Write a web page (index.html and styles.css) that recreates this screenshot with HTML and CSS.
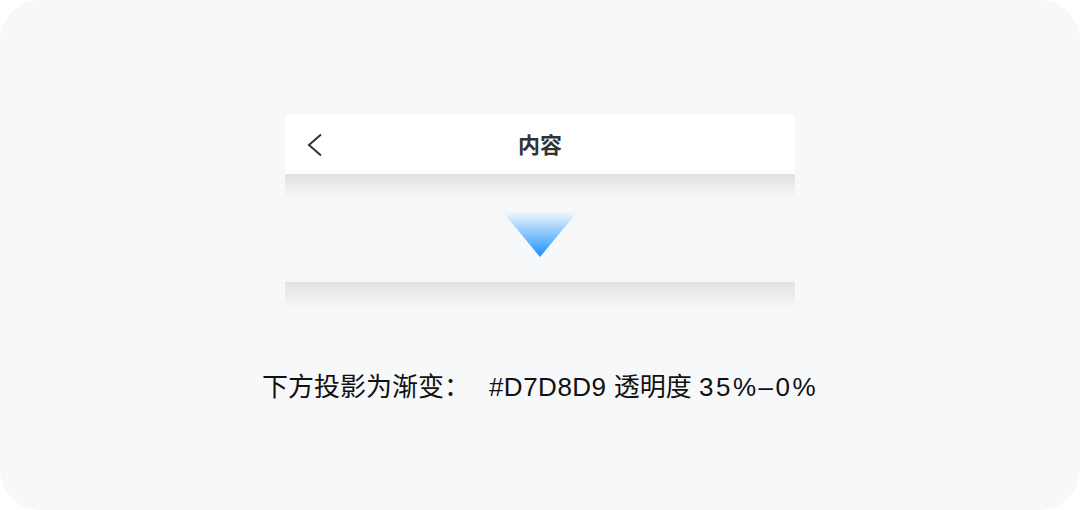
FILE: index.html
```html
<!DOCTYPE html>
<html lang="zh-CN">
<head>
  <meta charset="UTF-8">
  <meta name="viewport" content="width=device-width, initial-scale=1.0">
  <title>下方投影</title>
  <link rel="stylesheet" href="styles.css">
</head>
<body>
  <div class="card">
    <div class="demo">
      <div class="navbar">
        <svg class="back" width="15" height="24" viewBox="0 0 15 24">
          <polyline points="14,1.5 2,12 14,22.5" fill="none" stroke="#333" stroke-width="2" stroke-linejoin="miter"/>
        </svg>
        <span class="title">内容</span>
        <span></span>
      </div>
      <div class="shadow"></div>
      <svg class="arrow" width="76" height="46" viewBox="0 0 76 46">
        <defs>
          <linearGradient id="fade" x1="0" y1="0" x2="0" y2="1">
            <stop offset="0" stop-color="#1890ff" stop-opacity="0"/>
            <stop offset="1" stop-color="#1890ff" stop-opacity="1"/>
          </linearGradient>
        </defs>
        <polygon points="0,0 76,0 38,46" fill="url(#fade)"/>
      </svg>
      <div class="shadow band"></div>
    </div>
    <p class="caption">下方投影为渐变：<span class="code">#D7D8D9</span> 透明度 <span class="range">35%–0%</span></p>
  </div>
</body>
</html>
```

FILE: styles.css
```css
body {
  margin: 0;
  background: #ffffff;
  font-family: "Liberation Sans", "Noto Sans CJK SC", sans-serif;
}
.card {
  height: 510px;
  background: #f7f8fa;
  border-radius: 40px;
  padding-top: 115px;
  box-sizing: border-box;
}
.demo {
  width: 510px;
  margin: 0 auto;
  display: flex;
  flex-direction: column;
  align-items: center;
}
.navbar {
  width: 100%;
  height: 59px;
  background: #ffffff;
  display: grid;
  grid-template-columns: 1fr auto 1fr;
  align-items: center;
  padding: 0 22px;
  box-sizing: border-box;
}
.back {
  display: block;
  margin-top: 1px;
}
.title {
  font-family: "Noto Sans CJK SC", sans-serif;
  font-size: 22px;
  font-weight: 700;
  color: #333333;
  line-height: 1;
  margin-bottom: 3px;
}
.shadow {
  width: 100%;
  height: 26px;
  background: linear-gradient(rgba(215, 216, 217, 0.7), rgba(215, 216, 217, 0));
}
.arrow {
  display: block;
  margin-top: 11px;
}
.band {
  margin-top: 25px;
}
.caption {
  margin: 62px 0 0;
  text-align: center;
  font-size: 26px;
  line-height: 34px;
  color: #111111;
}
.code {
  margin-left: 19px;
  letter-spacing: 0.5px;
}
.range {
  letter-spacing: 2.5px;
}
```
